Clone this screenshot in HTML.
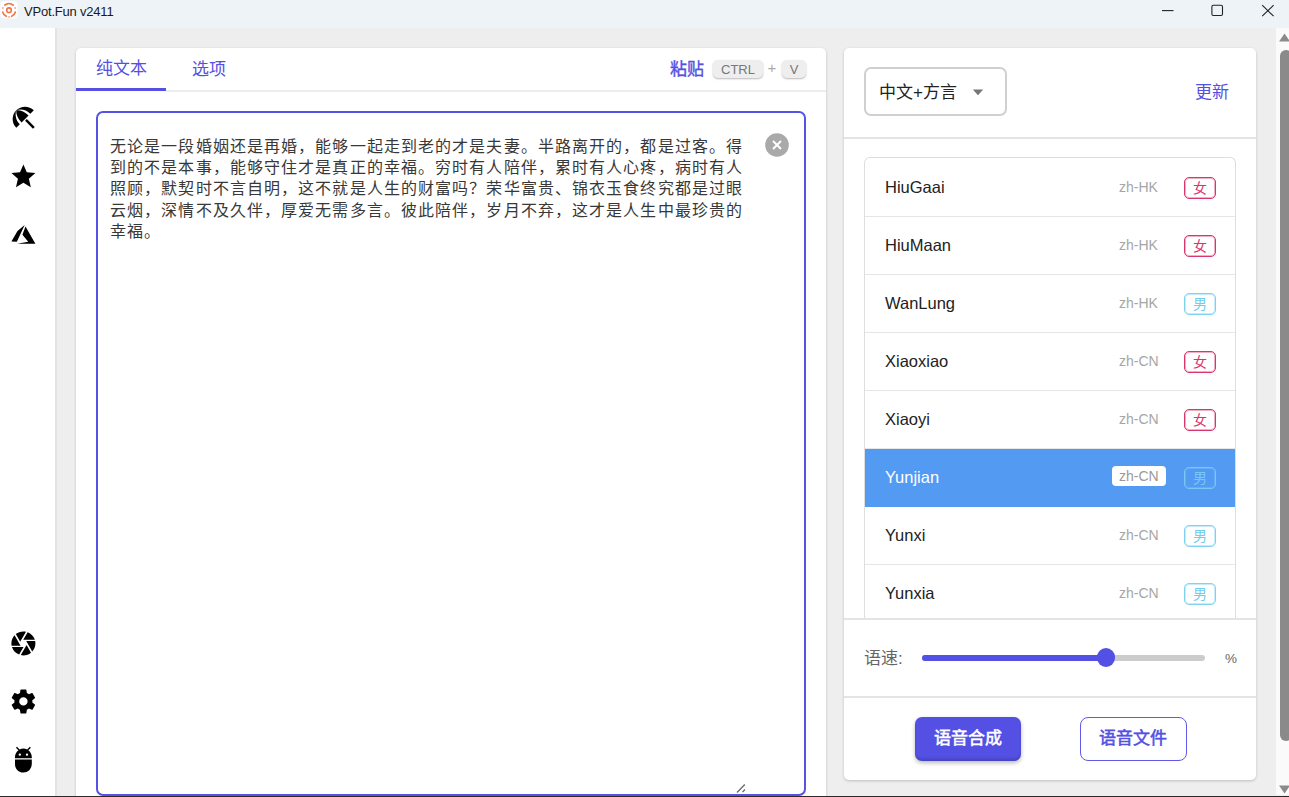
<!DOCTYPE html>
<html lang="zh-CN"><head><meta charset="utf-8">
<style>
*{box-sizing:border-box;margin:0;padding:0}
html,body{width:1289px;height:797px;overflow:hidden;background:#eeeeee;font-family:"Liberation Sans",sans-serif;position:relative}
.abs{position:absolute}
#title{left:0;top:0;width:1289px;height:28px;background:#eef3f8}
#title .t{left:24px;top:4px;font-size:13px;letter-spacing:-0.2px;color:#1a1a1a;white-space:nowrap}
#side{left:0;top:28px;width:55px;height:769px;background:#fff}
#strip{left:55px;top:28px;width:2px;height:769px;background:#e3e3e3}
.card{background:#fff;border-radius:5px;box-shadow:0 1px 3px rgba(0,0,0,.2)}
#lcard{left:76px;top:47.5px;width:749.5px;height:770px}
#rcard{left:844px;top:47.5px;width:412px;height:732.5px}
.tab{font-size:17px;color:#5350e3;white-space:nowrap;line-height:20px}
#tabline{left:76px;top:88px;width:90px;height:2.5px;background:#5350e3}
#tabdiv{left:166px;top:90px;width:660px;height:2px;background:#ececec}
.kbd{font-size:13px;color:#777;background:#eeeeee;border-radius:5px;box-shadow:0 1px 2px rgba(0,0,0,.28);height:18px;line-height:19px;text-align:center}
#ta{left:96.2px;top:111.4px;width:710px;height:684.8px;border:2px solid #5552e4;border-radius:7px}
.ln{left:110px;font-size:16px;letter-spacing:1.11px;line-height:20px;color:#383838;white-space:nowrap}
#bottomline{left:0;top:796px;width:1289px;height:1px;background:#2a2a2a}
#scroll{left:1276px;top:28px;width:13px;height:767px;background:#fafafa}
#thumb{left:1280px;top:50px;width:12px;height:691px;background:#8a8a8a;border-radius:6px}
#sel{left:864px;top:67px;width:143px;height:49px;border:2px solid #d0d0d0;border-radius:7px}
#list{left:864px;top:157px;width:372px;height:462px;border:1px solid #dedede;border-bottom:none;border-radius:6px 6px 0 0;overflow:hidden}
.row{position:absolute;left:0;width:370px;height:58px;border-bottom:1px solid #e6e6e6}
.row .n{position:absolute;left:20px;top:18px;font-size:16.5px;color:#222;line-height:20px}
.row .l{position:absolute;left:254px;top:20px;font-size:14px;color:#a6a6a6;line-height:16px}
.row .g{position:absolute;left:319px;top:17.5px;width:32px;height:22px;border:1px solid #d9366c;box-shadow:inset 0 0 0 1px rgba(217,54,108,.4);border-radius:5px;color:#d9366c;font-size:14px;text-align:center;line-height:20px}
.row .g.m{border-color:#80d2f2;color:#70ccf0;box-shadow:inset 0 0 0 1px rgba(128,210,242,.45)}
.row.act{background:#539af3;border-bottom-color:#539af3}
.row.act .n{color:#fff}
.row.act .l{background:#fff;color:#9a9a9a;border-radius:4px;padding:0 0 0 7px;width:54px;left:247px;top:17px;height:20px;line-height:20px}
.row.act .g{border-color:#78c8f4;color:#78c8f4;box-shadow:inset 0 0 0 1px rgba(120,200,244,.4)}
.hdiv{height:1.5px;background:#e4e4e4}
.btn{font-size:17px;-webkit-text-stroke:0.55px currentColor;text-align:center;line-height:44px;border-radius:7px}
svg{position:absolute;overflow:visible}
</style></head><body>
<div id="title" class="abs">
 <svg style="left:0;top:0" width="19" height="20" viewBox="0 0 19 20">
  <rect x="0.5" y="1" width="17" height="17.5" rx="4" fill="#fff"/>
  <path d="M13.24 5.14A6.6 6.6 0 0 0 4.76 5.14M2.69 12.13A6.6 6.6 0 0 0 6.42 16.28M11.58 16.28A6.6 6.6 0 0 0 15.31 12.13" fill="none" stroke="#f07448" stroke-width="1.7" stroke-linecap="round"/>
  <circle cx="2.8" cy="7.94" r="0.95" fill="#f7a888"/><circle cx="15.2" cy="7.94" r="0.95" fill="#f7a888"/><circle cx="9" cy="16.9" r="0.95" fill="#f7a888"/>
  <circle cx="9" cy="10.2" r="2.3" fill="none" stroke="#f07448" stroke-width="1.6"/>
 </svg>
 <div class="t abs">VPot.Fun v2411</div>
 <svg style="left:1160px;top:5px" width="16" height="12"><line x1="2" y1="5.6" x2="13.5" y2="5.6" stroke="#222" stroke-width="1.1"/></svg>
 <svg style="left:1210px;top:4px" width="16" height="14"><rect x="1.9" y="1.3" width="10.6" height="10.2" rx="1.4" fill="none" stroke="#222" stroke-width="1.1"/></svg>
 <svg style="left:1260px;top:4px" width="16" height="14"><path d="M2.2 1.2L13.6 12.2M13.6 1.2L2.2 12.2" stroke="#222" stroke-width="1.1"/></svg>
</div>
<div id="side" class="abs">
 <svg style="left:8.8px;top:75.2px" width="29.4" height="29.4" viewBox="0 0 24 24"><path fill="#000" d="M13.127 14.56l1.43-1.43 6.44 6.443L19.57 21zm4.293-5.73l2.86-2.86c-3.95-3.950-10.35-3.96-14.3-.02 3.93-1.3 8.31-.25 11.440 2.88zM5.950 5.98c-3.94 3.95-3.93 10.35.02 14.3l2.86-2.86C5.7 14.29 4.65 9.91 5.95 5.98zm.02-.02l-.01.01c-.38 3.01 1.17 6.88 4.3 10.02l5.73-5.73c-3.13-3.13-7.01-4.68-10.02-4.3z"/></svg>
 <svg style="left:9px;top:133.5px" width="28.8" height="28.8" viewBox="0 0 24 24"><path fill="#000" d="M12,17.27L18.18,21L16.54,13.97L22,9.24L14.81,8.62L12,2L9.19,8.62L2,9.24L7.45,13.97L5.82,21L12,17.27Z"/></svg>
 <svg style="left:8.8px;top:192px" width="28.8" height="28.8" viewBox="0 0 24 24"><path fill="#000" d="M13.05,4.24L6.56,18.05L2,18L7.09,9.24L13.05,4.24M13.75,5.33L22,19.76H6.74L16.04,18.1L11.17,12.31L13.75,5.33Z"/></svg>
 <svg style="left:9px;top:600.7px" width="28.8" height="28.8" viewBox="0 0 24 24"><path fill="#000" d="M13.73,15L9.83,21.76C10.53,21.91 11.25,22 12,22C14.4,22 16.6,21.15 18.32,19.75L14.66,13.4M2.46,15C3.38,17.92 5.61,20.26 8.45,21.34L12.12,15M8.54,12L4.64,5.25C3,7 2,9.39 2,12C2,12.68 2.07,13.35 2.2,14H9.69M21.8,10H14.31L14.6,10.5L19.36,18.75C21,16.97 22,14.6 22,12C22,11.31 21.93,10.64 21.8,10M21.54,9C20.62,6.07 18.39,3.74 15.55,2.66L11.88,9M9.4,10.5L14.17,2.24C13.47,2.09 12.75,2 12,2C9.6,2 7.4,2.84 5.68,4.25L9.34,10.6L9.4,10.5Z"/></svg>
 <svg style="left:9px;top:659px" width="28.8" height="28.8" viewBox="0 0 24 24"><path fill="#000" d="M12,15.5A3.5,3.5 0 0,1 8.5,12A3.5,3.5 0 0,1 12,8.5A3.5,3.5 0 0,1 15.5,12A3.5,3.5 0 0,1 12,15.5M19.43,12.97C19.47,12.65 19.5,12.33 19.5,12C19.5,11.67 19.47,11.34 19.43,11L21.54,9.37C21.73,9.22 21.78,8.95 21.66,8.73L19.66,5.27C19.54,5.05 19.27,4.96 19.05,5.05L16.56,6.05C16.04,5.66 15.5,5.32 14.87,5.07L14.5,2.42C14.46,2.18 14.25,2 14,2H10C9.75,2 9.54,2.18 9.5,2.42L9.13,5.07C8.5,5.32 7.96,5.66 7.44,6.05L4.95,5.05C4.73,4.96 4.46,5.05 4.34,5.27L2.34,8.73C2.21,8.95 2.27,9.22 2.46,9.37L4.57,11C4.53,11.34 4.5,11.67 4.5,12C4.5,12.33 4.53,12.65 4.57,12.97L2.46,14.63C2.27,14.78 2.21,15.05 2.34,15.27L4.34,18.73C4.46,18.95 4.73,19.03 4.95,18.95L7.44,17.94C7.96,18.34 8.5,18.68 9.13,18.93L9.5,21.58C9.54,21.82 9.75,22 10,22H14C14.25,22 14.46,21.82 14.5,21.58L14.87,18.93C15.5,18.67 16.04,18.34 16.56,17.94L19.05,18.95C19.27,19.03 19.54,18.95 19.66,18.73L21.66,15.27C21.78,15.05 21.73,14.78 21.54,14.63L19.43,12.97Z"/></svg>
 <svg style="left:9px;top:717px" width="28.8" height="28.8" viewBox="0 0 24 24"><path fill="#000" d="M15,9A1,1 0 0,1 14,8A1,1 0 0,1 15,7A1,1 0 0,1 16,8A1,1 0 0,1 15,9M9,9A1,1 0 0,1 8,8A1,1 0 0,1 9,7A1,1 0 0,1 10,8A1,1 0 0,1 9,9M16.12,4.37L18.22,2.27L17.4,1.44L15.09,3.75C14.16,3.28 13.11,3 12,3C10.88,3 9.84,3.28 8.91,3.75L6.6,1.44L5.78,2.27L7.88,4.37C6.14,5.640 5,7.68 5,10V11H19V10C19,7.68 17.86,5.64 16.12,4.37M5,16C5,19.86 8.13,23 12,23A7,7 0 0,0 19,16V12H5V16Z"/></svg>
</div>
<div id="strip" class="abs"></div>
<div id="lcard" class="abs card"></div>
<div id="rcard" class="abs card"></div>

<div class="abs tab" style="left:95.5px;top:59px">纯文本</div>
<div class="abs tab" style="left:192px;top:59.5px">选项</div>
<div id="tabline" class="abs"></div>
<div id="tabdiv" class="abs"></div>
<div class="abs tab" style="left:670px;top:59.5px;-webkit-text-stroke:0.35px #5350e3">粘贴</div>
<div class="abs kbd" style="left:713px;top:60px;width:50px">CTRL</div>
<div class="abs" style="left:767.5px;top:58.5px;font-size:15px;color:#aaa">+</div>
<div class="abs kbd" style="left:782px;top:60px;width:24px">V</div>

<div id="ta" class="abs"></div>
<div class="abs ln" style="top:136.6px">无论是一段婚姻还是再婚，能够一起走到老的才是夫妻。半路离开的，都是过客。得</div>
<div class="abs ln" style="top:158px">到的不是本事，能够守住才是真正的幸福。穷时有人陪伴，累时有人心疼，病时有人</div>
<div class="abs ln" style="top:179.4px">照顾，默契时不言自明，这不就是人生的财富吗？荣华富贵、锦衣玉食终究都是过眼</div>
<div class="abs ln" style="top:200.8px">云烟，深情不及久伴，厚爱无需多言。彼此陪伴，岁月不弃，这才是人生中最珍贵的</div>
<div class="abs ln" style="top:222.2px">幸福。</div>
<svg style="left:765px;top:132.5px" width="24" height="24" viewBox="0 0 24 24"><circle cx="12" cy="12" r="11.8" fill="#a9a9a9"/><path d="M8 8L16 16M16 8L8 16" stroke="#fff" stroke-width="1.9"/></svg>
<svg style="left:735px;top:783px" width="12" height="12"><path d="M2 9.5L9.8 1.5M7.5 9L10 6.5" stroke="#6a6a6a" stroke-width="1.3"/></svg>

<div id="sel" class="abs"></div>
<div class="abs" style="left:879px;top:82.5px;font-size:17px;line-height:20px;color:#222;white-space:nowrap">中文+方言</div>
<svg style="left:972px;top:88.5px" width="12" height="7"><path d="M0.8 0.5H11.2L6 6.2Z" fill="#777"/></svg>
<div class="abs" style="left:1195px;top:82.5px;font-size:17px;line-height:20px;color:#5350e3;white-space:nowrap">更新</div>
<div class="abs hdiv" style="left:844px;top:137px;width:412px"></div>

<div id="list" class="abs">
 <div class="row" style="top:1px"><span class="n">HiuGaai</span><span class="l">zh-HK</span><span class="g">女</span></div>
 <div class="row" style="top:59px"><span class="n">HiuMaan</span><span class="l">zh-HK</span><span class="g">女</span></div>
 <div class="row" style="top:117px"><span class="n">WanLung</span><span class="l">zh-HK</span><span class="g m">男</span></div>
 <div class="row" style="top:175px"><span class="n">Xiaoxiao</span><span class="l">zh-CN</span><span class="g">女</span></div>
 <div class="row" style="top:233px"><span class="n">Xiaoyi</span><span class="l">zh-CN</span><span class="g">女</span></div>
 <div class="row act" style="top:291px"><span class="n">Yunjian</span><span class="l">zh-CN</span><span class="g m">男</span></div>
 <div class="row" style="top:349px"><span class="n">Yunxi</span><span class="l">zh-CN</span><span class="g m">男</span></div>
 <div class="row" style="top:407px"><span class="n">Yunxia</span><span class="l">zh-CN</span><span class="g m">男</span></div>
</div>
<div class="abs hdiv" style="left:844px;top:618px;width:412px"></div>

<div class="abs" style="left:864px;top:648.5px;font-size:17px;line-height:20px;color:#666;white-space:nowrap">语速:</div>
<div class="abs" style="left:922px;top:655px;width:283px;height:6px;border-radius:3px;background:#cccccc"></div>
<div class="abs" style="left:922px;top:655px;width:184px;height:6px;border-radius:3px;background:#5350e3"></div>
<div class="abs" style="left:1096.5px;top:648px;width:18.5px;height:18.5px;border-radius:50%;background:#5350e3"></div>
<div class="abs" style="left:1225px;top:650.5px;font-size:13.5px;line-height:16px;color:#666">%</div>
<div class="abs hdiv" style="left:844px;top:696px;width:412px"></div>

<div class="abs btn" style="left:915px;top:717px;width:106px;height:43.7px;background:#5350e3;color:#fff;box-shadow:inset 0 -2.5px 2px rgba(0,0,0,.14),0 2px 4px rgba(0,0,0,.28)">语音合成</div>
<div class="abs btn" style="left:1080px;top:717px;width:106.5px;height:43.5px;border:1px solid #5f5ae8;color:#5350e3;line-height:42px;border-radius:8px">语音文件</div>

<div id="scroll" class="abs"></div>
<svg style="left:1278px;top:32px" width="14" height="10"><path d="M1 9.5L6.5 1.5L12 9.5Z" fill="#8a8a8a"/></svg>
<div id="thumb" class="abs"></div>
<svg style="left:1278px;top:785px" width="14" height="10"><path d="M1 0.5L6.5 8.5L12 0.5Z" fill="#8a8a8a"/></svg>
<div id="bottomline" class="abs"></div>
</body></html>
